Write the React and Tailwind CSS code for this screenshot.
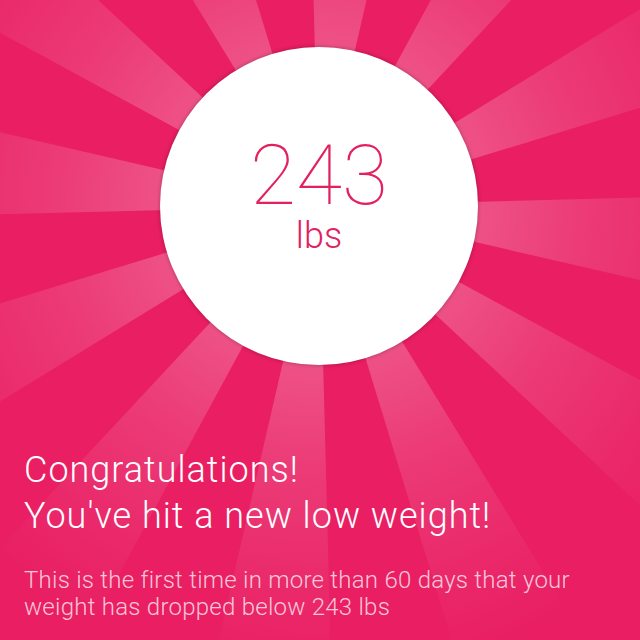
import React from "react";

const CX = 319;
const CY = 206;

function Rays() {
  const rays = [];
  for (let k = 0; k < 12; k++) {
    const a0 = ((-1.5 + 30 * k) * Math.PI) / 180;
    const a1 = ((13 + 30 * k) * Math.PI) / 180;
    const R = 900;
    const pts = `${CX},${CY} ${CX + R * Math.cos(a0)},${CY + R * Math.sin(a0)} ${CX + R * Math.cos(a1)},${CY + R * Math.sin(a1)}`;
    rays.push(<polygon key={k} points={pts} fill="url(#rayfade)" />);
  }
  return (
    <svg className="absolute inset-0" width="640" height="640" viewBox="0 0 640 640">
      <defs>
        <radialGradient id="rayfade" gradientUnits="userSpaceOnUse" cx={CX} cy={CY} r="480">
          <stop offset="0.33" stopColor="#ffffff" stopOpacity="0.23" />
          <stop offset="0.55" stopColor="#ffffff" stopOpacity="0.13" />
          <stop offset="0.8" stopColor="#ffffff" stopOpacity="0.05" />
          <stop offset="1" stopColor="#ffffff" stopOpacity="0" />
        </radialGradient>
      </defs>
      {rays}
    </svg>
  );
}

export default function App() {
  return (
    <div className="relative w-[640px] h-[640px] overflow-hidden bg-[#e91e63] font-['Roboto',sans-serif]">
      <Rays />
      <div className="relative flex flex-col">
        <div className="mt-[47px] ml-[160px] w-[318px] h-[318px] rounded-full bg-white shadow-[0_0_4px_rgba(0,0,0,0.3)] flex flex-col items-center">
          <div className="mt-[87px] text-[84px] leading-none font-thin text-[#e2215f]">243</div>
          <div className="text-[36px] leading-none font-light text-[#e2215f]">lbs</div>
        </div>
        <div className="mt-[82px] px-[24px]">
          <div className="text-[36px] leading-[46px] font-light tracking-[1px] text-white">
            Congratulations!
            <br />
            You've hit a new low weight!
          </div>
          <div className="mt-[28px] text-[24px] leading-[27px] font-light tracking-[0.25px] text-white/75">
            This is the first time in more than 60 days that your
            <br />
            weight has dropped below 243 lbs
          </div>
        </div>
      </div>
    </div>
  );
}
